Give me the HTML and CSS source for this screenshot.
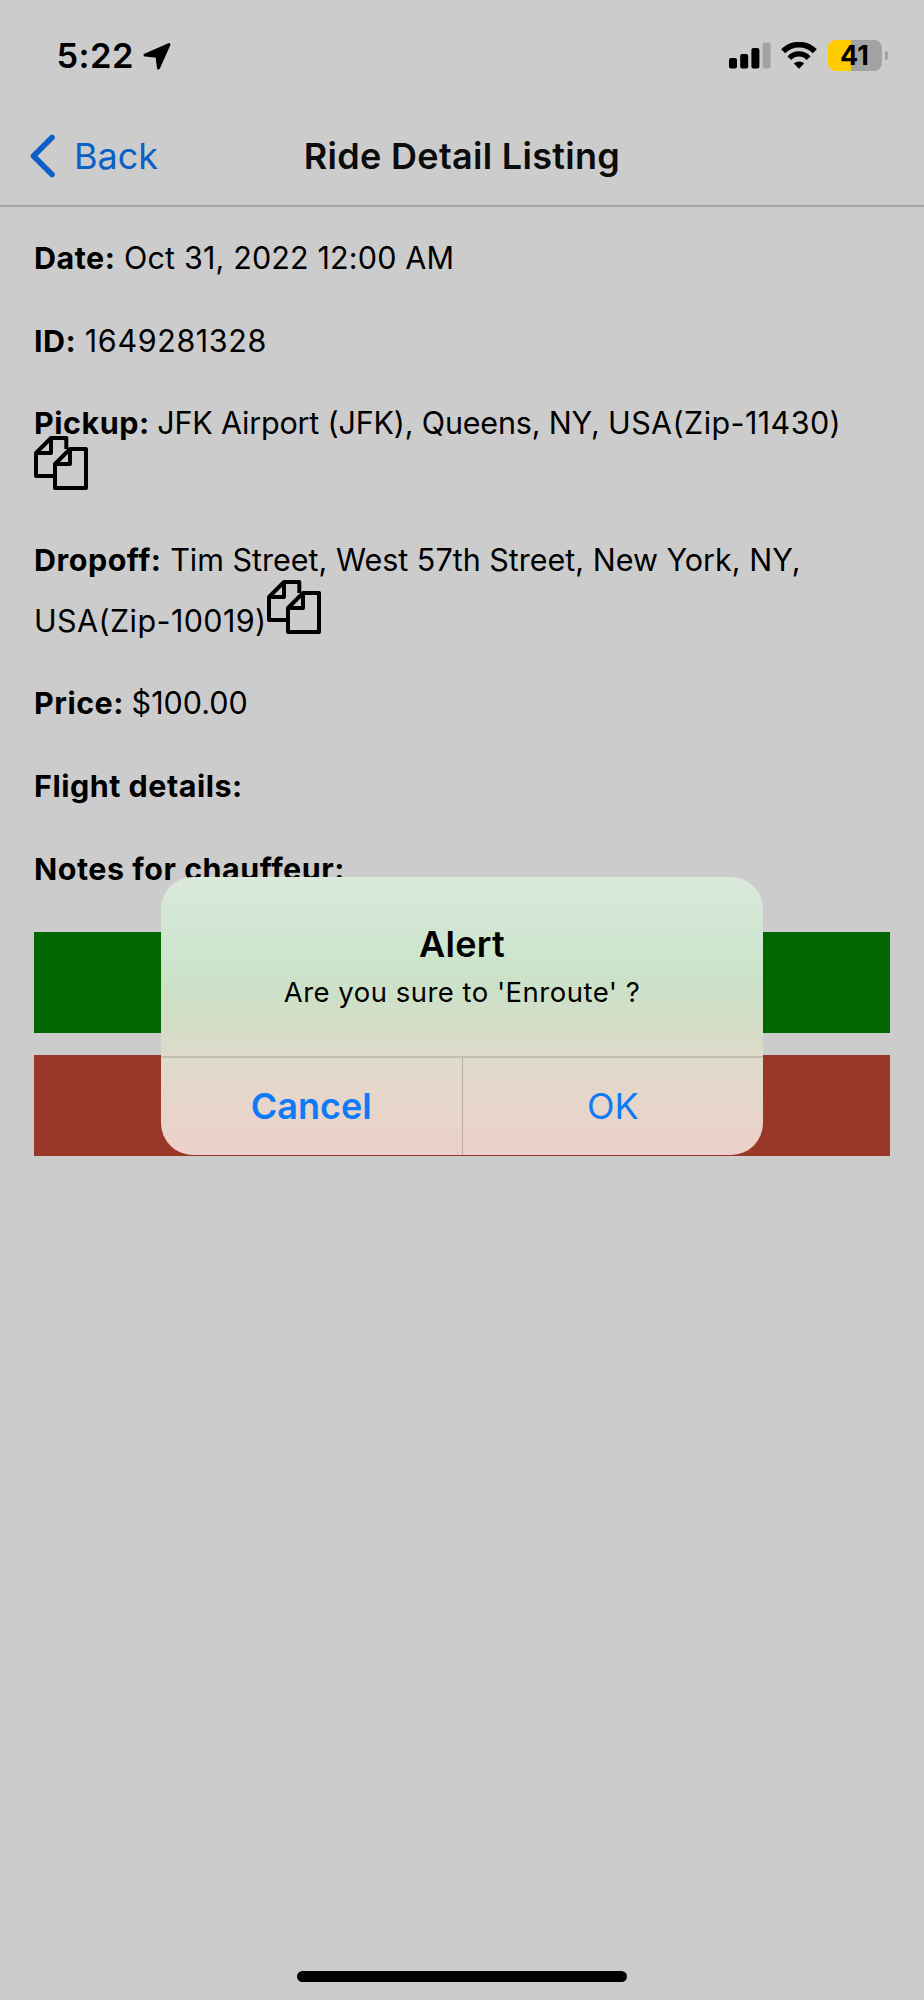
FILE: index.html
```
<!DOCTYPE html>
<html lang="en">
<head>
    <meta charset="UTF-8">
    <meta name="viewport" content="width=device-width, initial-scale=1.0">
    <title>Ride Detail Listing</title>
    <link rel="stylesheet" href="styles.css">
</head>
<body>
    <div class="status-bar">
        <span class="time">5:22</span>
        <svg class="location" viewBox="0 0 28 28">
            <path d="M26 2.5 L2 13 L14 14.2 L15.5 26 Z" fill="#000" stroke="#000" stroke-width="3" stroke-linejoin="round"/>
        </svg>
        <div class="status-icons">
            <svg class="signal" viewBox="0 0 42 27">
                <rect x="0" y="16" width="8" height="10.5" rx="2"/>
                <rect x="11.2" y="12" width="8" height="14.5" rx="2"/>
                <rect x="22.4" y="6" width="8" height="20.5" rx="2"/>
                <rect x="33.6" y="0.5" width="8" height="26" rx="2" fill="#a3a3a3"/>
            </svg>
            <svg class="wifi" viewBox="0 0 36 27">
                <path d="M2.2 9.3 A22 22 0 0 1 33.8 9.3" fill="none" stroke="#000" stroke-width="5.6"/>
                <path d="M8.4 16.2 A13 13 0 0 1 27.6 16.2" fill="none" stroke="#000" stroke-width="5.2"/>
                <path d="M18 26.8 L12.8 21.6 A7.2 7.2 0 0 1 23.2 21.6 Z"/>
            </svg>
            <div class="battery">41</div>
            <div class="battery-cap"></div>
        </div>
    </div>

    <header class="navbar">
        <a class="back" href="#">
            <svg viewBox="0 0 26 44">
                <path d="M22 3.5 L3.5 22 L22 40.5" fill="none" stroke="#0a60c6" stroke-width="5.6" stroke-linecap="round" stroke-linejoin="round"/>
            </svg>
            <span>Back</span>
        </a>
        <h1>Ride Detail Listing</h1>
    </header>

    <main class="details">
        <p><b>Date:</b> <span class="date">Oct 31, 2022 12:00 AM</span></p>
        <p><b>ID:</b> <span class="number">1649281328</span></p>
        <p class="pickup"><b>Pickup:</b> <span class="street">JFK Airport (JFK), Queens, NY, </span><span class="zip">USA(Zip-11430)</span>
            <svg class="copy" viewBox="0 0 54 54">
                <path d="M20 40 H2 V17 L17 2 H32.3 V13 M17 2 V17 H2"/>
                <path d="M21 52 V28 L36 13 H52 V52 Z M36 13 V28 H21"/>
            </svg>
        </p>
        <p class="dropoff"><b>Dropoff:</b> Tim Street, West 57th Street, New York, NY,<br><span class="zip">USA(Zip-10019)</span><svg class="copy" viewBox="0 0 54 54">
                <path d="M20 40 H2 V17 L17 2 H32.3 V13 M17 2 V17 H2"/>
                <path d="M21 52 V28 L36 13 H52 V52 Z M36 13 V28 H21"/>
            </svg></p>
        <p><b>Price:</b> <span class="price">$100.00</span></p>
        <p><b>Flight details:</b></p>
        <p><b>Notes for chauffeur:</b></p>
        <div class="btn btn-green"></div>
        <div class="btn btn-red"></div>
    </main>

    <div class="home-indicator"></div>

    <div class="alert">
        <div class="alert-body">
            <h2>Alert</h2>
            <div class="message">Are you sure to 'Enroute' ?</div>
        </div>
        <div class="alert-actions">
            <button class="cancel">Cancel</button>
            <button>OK</button>
        </div>
    </div>
</body>
</html>
```
FILE: styles.css
```
* {
    box-sizing: border-box;
}
body {
    margin: 0;
    height: 2000px;
    display: flex;
    flex-direction: column;
    background-color: #cccccc;
    color: #000;
    font-family: Inter, sans-serif;
    position: relative;
    overflow: hidden;
}
h1, h2, p {
    margin: 0;
}

/* status bar */
.status-bar {
    display: flex;
    align-items: center;
    height: 111px;
    padding: 0 36.5px 0 56.5px;
}
.time {
    width: 77px;
    font-size: 34.5px;
    font-weight: 600;
    letter-spacing: 0.4px;
    white-space: nowrap;
}
.location {
    width: 28px;
    height: 28px;
    margin-left: 9px;
}
.status-icons {
    display: flex;
    align-items: center;
    margin-left: auto;
}
.signal {
    width: 42px;
    height: 27px;
}
.wifi {
    width: 36px;
    height: 27px;
    margin-left: 10px;
}
.battery {
    width: 54px;
    height: 31px;
    margin-left: 10.5px;
    border-radius: 8px;
    background: linear-gradient(to right, #ffcc00 42%, #a3a3a3 42%);
    font-size: 27px;
    font-weight: 700;
    line-height: 31px;
    text-align: center;
}
.battery-cap {
    width: 3px;
    height: 9px;
    margin-left: 3px;
    border-radius: 0 4px 4px 0;
    background-color: #a3a3a3;
}

/* navigation */
.navbar {
    display: grid;
    grid-template-columns: 1fr auto 1fr;
    align-items: center;
    height: 96px;
    padding: 0 30px 4px;
    border-bottom: 2px solid #a4a4a4;
}
.navbar h1 {
    color: #0c0c0c;
    font-size: 36px;
    font-weight: 600;
    line-height: 44px;
    letter-spacing: 0.3px;
}
.back {
    display: flex;
    align-items: center;
    color: #0a60c6;
    font-size: 36px;
    line-height: 44px;
    text-decoration: none;
}
.back svg {
    width: 26px;
    height: 44px;
    margin-right: 18px;
}

/* ride details */
.details {
    padding: 32.2px 34px 0;
    font-size: 30.5px;
    line-height: 38px;
    white-space: nowrap;
}
.details p {
    margin-bottom: 44.6px;
}
.details b {
    font-weight: 700;
    letter-spacing: 0.5px;
}
.date {
    letter-spacing: 0.15px;
}
.number {
    letter-spacing: 0.6px;
}
.street {
    margin-left: -1px;
    letter-spacing: -0.18px;
}
.zip {
    letter-spacing: 0.4px;
}
.price {
    margin-left: -1px;
}
.copy {
    width: 54px;
    height: 54px;
    fill: none;
    stroke: #000;
    stroke-width: 4;
    stroke-linejoin: round;
}
.details .pickup {
    padding-bottom: 5.9px;
}
.pickup .copy {
    display: block;
    margin-top: -6px;
}
.dropoff .copy {
    margin-top: 1px;
    vertical-align: -2px;
}
.btn {
    height: 101px;
}
.btn-green {
    margin-bottom: 22px;
    background-color: #006600;
}
.btn-red {
    background-color: #993729;
}
.home-indicator {
    width: 330px;
    height: 11px;
    margin: auto auto 18px;
    border-radius: 6px;
    background-color: #000;
}

/* alert dialog */
.alert {
    position: absolute;
    top: 877px;
    left: 161px;
    width: 602px;
    height: 278px;
    border-radius: 32px;
    overflow: hidden;
    background: linear-gradient(#dae9dc 0%, #cfe6d0 24%, #cbe2c8 38%, #d4ddc6 53%, #e0dacb 67%, #e7d5ca 84%, #edd0ca 100%);
    text-align: center;
}
.alert-body {
    height: 181px;
    padding-top: 45px;
    border-bottom: 2px solid #bfc0ac;
}
.alert h2 {
    font-size: 36px;
    font-weight: 600;
    line-height: 44px;
    letter-spacing: 0.3px;
}
.message {
    margin-top: 9px;
    font-size: 27.5px;
    line-height: 34px;
    letter-spacing: 0.48px;
}
.alert-actions {
    display: flex;
    height: 97px;
}
.alert-actions button {
    flex: 1;
    padding: 0 0 1px;
    border: none;
    background: none;
    color: #0f7af5;
    font-family: inherit;
    font-size: 36px;
}
.alert-actions .cancel {
    border-right: 1px solid #b8ae9f;
    font-weight: 600;
}
```
